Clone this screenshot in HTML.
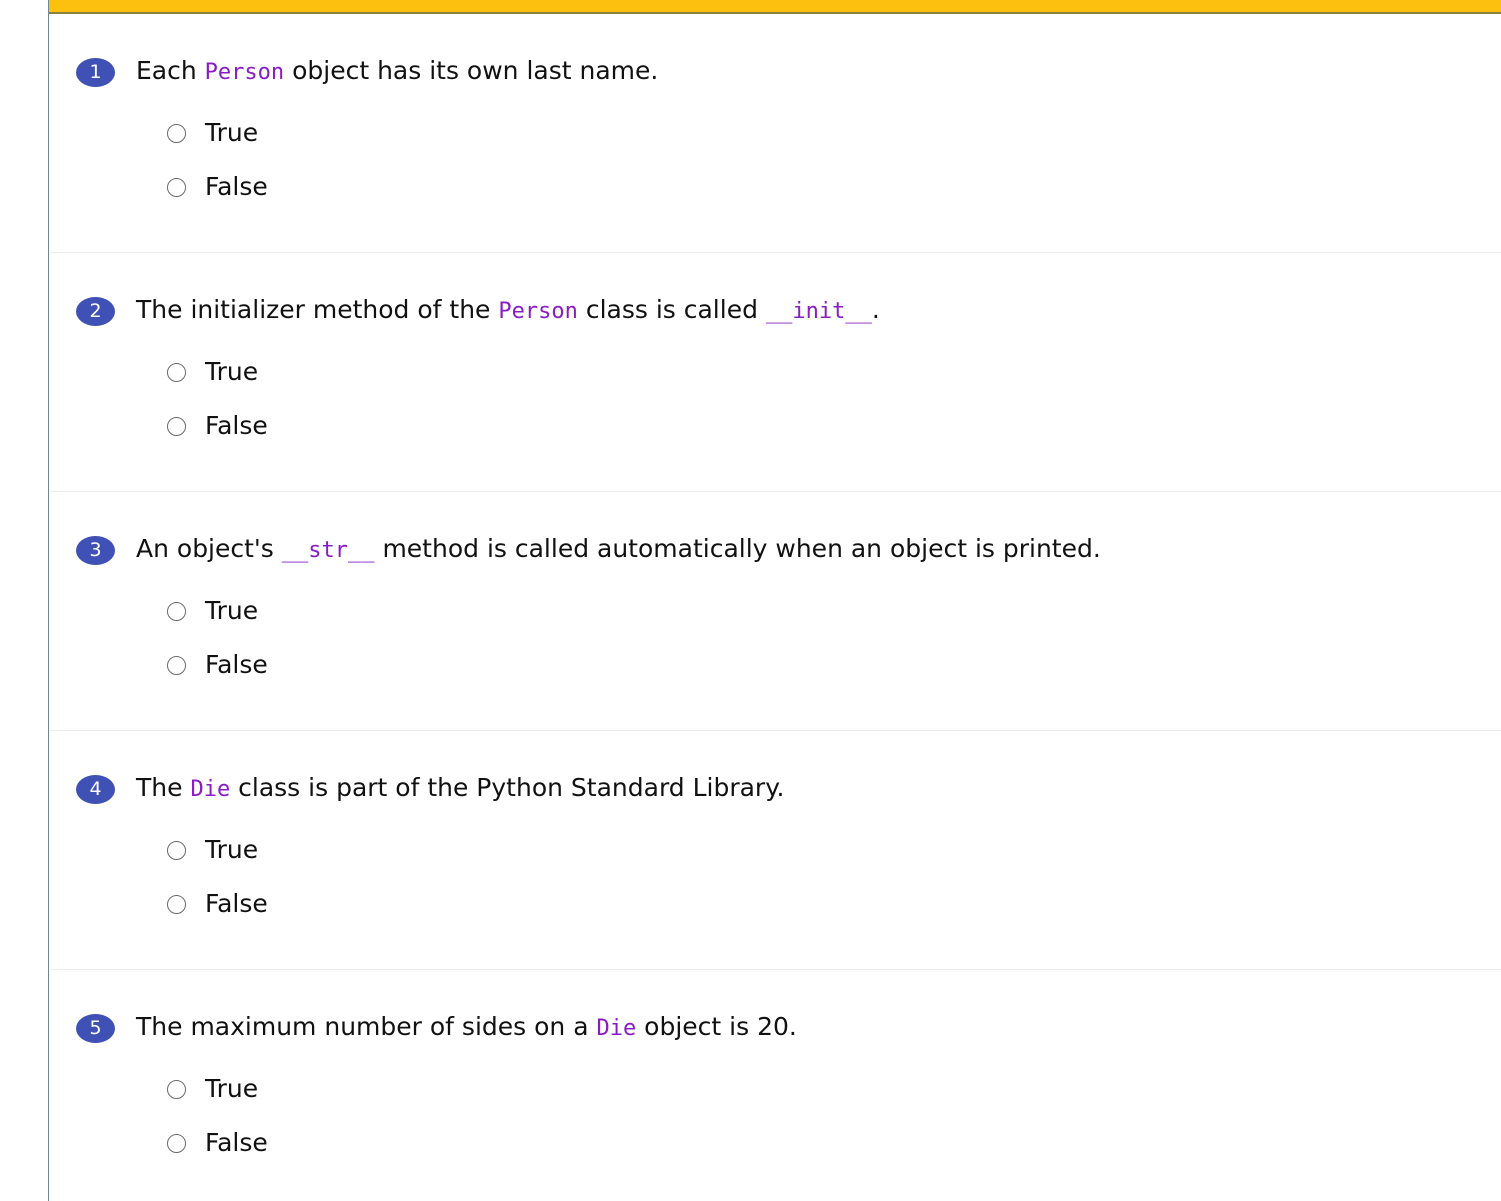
<!DOCTYPE html>
<html><head><meta charset="utf-8"><style>
html,body{margin:0;padding:0;width:1501px;height:1201px;overflow:hidden;background:#fff;font-family:"DejaVu Sans","Liberation Sans",sans-serif;color:#111;}
.lb{position:absolute;left:48px;top:0;width:1px;height:1201px;background:#6e8a8a;}
.top{position:absolute;left:49px;top:0;right:0;height:12px;background:#fdc00f;border-bottom:2px solid #8a8040;}
.sep{position:absolute;left:50px;right:0;height:1px;background:#ececec;}
.q{position:absolute;left:136px;font-size:25px;line-height:30px;white-space:nowrap;}
.b{position:absolute;left:76px;width:39px;height:29px;border-radius:50%;background:#3f51b5;color:#fff;font-size:19px;line-height:29px;text-align:center;}
.o{position:absolute;left:205px;font-size:25px;line-height:30px;}
.r{position:absolute;left:167px;width:17px;height:17px;border:1.7px solid #6a6a6a;border-radius:50%;}
code{font-family:"DejaVu Sans Mono","Liberation Mono",monospace;color:#8a1cc4;font-size:22px;}
</style></head><body>
<div class="lb"></div><div class="top"></div>
<div class="sep" style="top:252px"></div><div class="sep" style="top:491px"></div><div class="sep" style="top:730px"></div><div class="sep" style="top:969px"></div>

<div class="b" style="top:58px">1</div>
<div class="q" style="top:56px">Each <code>Person</code> object has its own last name.</div>
<div class="r" style="top:124px"></div><div class="o" style="top:118px">True</div>
<div class="r" style="top:178px"></div><div class="o" style="top:172px">False</div>

<div class="b" style="top:297px">2</div>
<div class="q" style="top:295px">The initializer method of the <code>Person</code> class is called <code>__init__</code>.</div>
<div class="r" style="top:363px"></div><div class="o" style="top:357px">True</div>
<div class="r" style="top:417px"></div><div class="o" style="top:411px">False</div>

<div class="b" style="top:536px">3</div>
<div class="q" style="top:534px">An object's <code>__str__</code> method is called automatically when an object is printed.</div>
<div class="r" style="top:602px"></div><div class="o" style="top:596px">True</div>
<div class="r" style="top:656px"></div><div class="o" style="top:650px">False</div>

<div class="b" style="top:775px">4</div>
<div class="q" style="top:773px">The <code>Die</code> class is part of the Python Standard Library.</div>
<div class="r" style="top:841px"></div><div class="o" style="top:835px">True</div>
<div class="r" style="top:895px"></div><div class="o" style="top:889px">False</div>

<div class="b" style="top:1014px">5</div>
<div class="q" style="top:1012px">The maximum number of sides on a <code>Die</code> object is 20.</div>
<div class="r" style="top:1080px"></div><div class="o" style="top:1074px">True</div>
<div class="r" style="top:1134px"></div><div class="o" style="top:1128px">False</div>
</body></html>
